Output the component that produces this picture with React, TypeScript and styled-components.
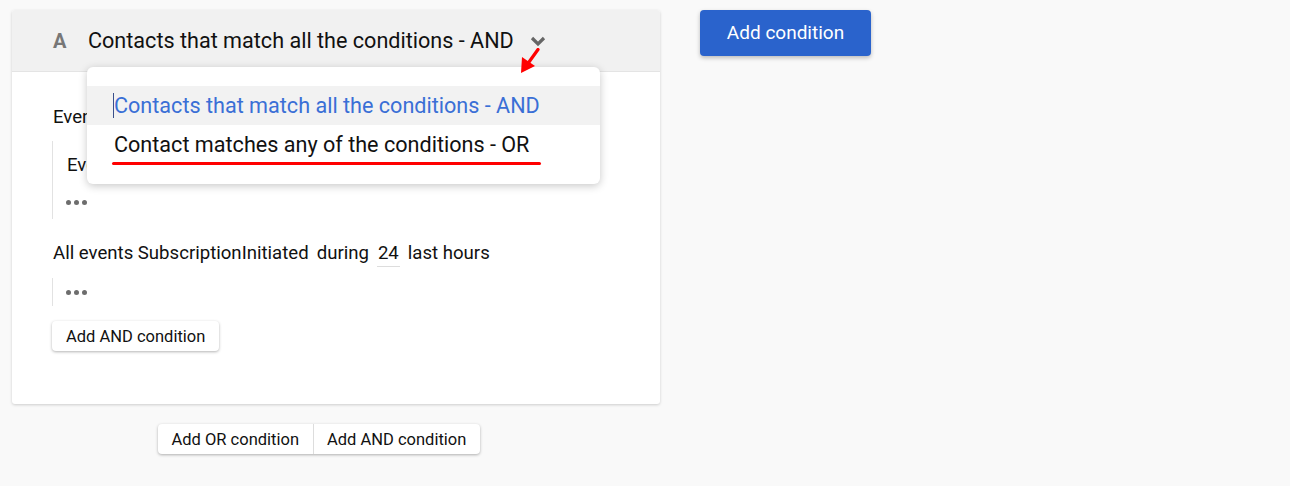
import React from "react";
import styled, { createGlobalStyle } from "styled-components";

const Global = createGlobalStyle`
  html, body { margin: 0; padding: 0; background: #f9f9f9; }
  body { font-family: Roboto, "Liberation Sans", sans-serif; color: #111; }
`;

const Page = styled.div`
  display: flex;
  align-items: flex-start;
  gap: 40px;
  padding: 10px 0 0 12px;
  width: 1290px;
  height: 486px;
  box-sizing: border-box;
  overflow: hidden;
`;

const Column = styled.div`
  display: flex;
  flex-direction: column;
  width: 648px;
`;

const Card = styled.div`
  position: relative;
  background: #fff;
  border-radius: 3px;
  box-shadow: 0 1px 3px rgba(0, 0, 0, 0.18);
  height: 394px;
`;

const Header = styled.div`
  display: flex;
  align-items: center;
  height: 61px;
  padding-left: 41px;
  background: #f1f1f1;
  border-bottom: 1px solid #e4e4e4;
  border-radius: 3px 3px 0 0;
`;

const Letter = styled.span`
  font-weight: 700;
  font-size: 20px;
  color: #777;
  width: 35px;
`;

const HeaderTitle = styled.span`
  font-size: 21.6px;
  color: #111;
  margin-top: -1px;
`;

const Chevron = styled.svg`
  margin-left: 16px;
`;

const Body = styled.div`
  padding: 33px 40px 0 40px;
  display: flex;
  flex-direction: column;
`;

const Line = styled.div<{ $mt?: number }>`
  font-size: 18.6px;
  line-height: 24px;
  display: flex;
  align-items: baseline;
  margin-top: ${(p) => p.$mt ?? 0}px;
  padding-left: 1px;
`;

const Nested = styled.div<{ $h: number; $mt: number }>`
  margin-top: ${(p) => p.$mt}px;
  border-left: 1px solid #e2e2e2;
  padding-left: 13px;
  height: ${(p) => p.$h}px;
  display: flex;
  flex-direction: column;
`;

const Dots = styled.div<{ $mt: number }>`
  display: flex;
  gap: 3px;
  margin-top: ${(p) => p.$mt}px;
  & > span {
    width: 5px;
    height: 5px;
    border-radius: 50%;
    background: #6d6d6d;
  }
`;

const Gap = styled.span`
  margin-left: 8px;
`;

const NumberField = styled.span`
  margin-left: 8px;
  padding: 0 1px;
  border-bottom: 1px solid #ddd;
  line-height: 26px;
`;

const WhiteButton = styled.button`
  align-self: flex-start;
  height: 30px;
  padding: 0 14px;
  margin-top: 15px;
  background: #fff;
  border: none;
  border-radius: 4px;
  box-shadow: 0 1px 3px rgba(0, 0, 0, 0.3);
  font-family: Roboto, "Liberation Sans", sans-serif;
  font-size: 16.5px;
  color: #111;
`;

const Group = styled.div`
  display: flex;
  align-self: flex-start;
  margin: 20px 0 0 146px;
  background: #fff;
  border-radius: 4px;
  box-shadow: 0 1px 3px rgba(0, 0, 0, 0.3);
`;

const GroupButton = styled.button<{ $divider?: boolean }>`
  height: 30px;
  padding: 0 13.5px;
  background: transparent;
  border: none;
  border-left: ${(p) => (p.$divider ? "1px solid #ddd" : "none")};
  font-family: Roboto, "Liberation Sans", sans-serif;
  font-size: 16.5px;
  color: #111;
`;

const Primary = styled.button`
  height: 46px;
  width: 171px;
  background: #2a63cc;
  color: #fff;
  border: none;
  border-radius: 4px;
  box-shadow: 0 2px 4px rgba(0, 0, 0, 0.25);
  font-family: Roboto, "Liberation Sans", sans-serif;
  font-size: 19px;
  padding: 0 0 2px;
`;

const Menu = styled.div`
  position: absolute;
  left: 75px;
  top: 57px;
  width: 513px;
  padding: 19px 0 20px;
  background: #fff;
  border-radius: 6px;
  box-shadow: 0 2px 8px rgba(0, 0, 0, 0.22);
`;

const MenuItem = styled.div<{ $active?: boolean }>`
  position: relative;
  height: 39px;
  display: flex;
  align-items: center;
  padding-left: 27px;
  font-size: 21.6px;
  background: ${(p) => (p.$active ? "#f2f2f2" : "#fff")};
  color: ${(p) => (p.$active ? "#3a6fd6" : "#111")};
`;

const Caret = styled.span`
  display: inline-block;
  width: 1px;
  height: 25px;
  background: #3a4f8a;
  margin-left: -1px;
`;

const RedUnderline = styled.div`
  position: absolute;
  left: 25px;
  width: 429px;
  bottom: -1px;
  height: 3px;
  border-radius: 2px;
  background: #f00;
`;

const Arrow = styled.svg`
  position: absolute;
  left: 508px;
  top: 38px;
`;

export default function App() {
  return (
    <>
      <Global />
      <Page>
        <Column>
          <Card>
            <Header>
              <Letter>A</Letter>
              <HeaderTitle>Contacts that match all the conditions - AND</HeaderTitle>
              <Chevron width="16" height="12" viewBox="0 0 16 12">
                <path d="M2 3 L8 9 L14 3" fill="none" stroke="#666" strokeWidth="3.2" />
              </Chevron>
            </Header>
            <Body>
              <Line>Events</Line>
              <Nested $h={78} $mt={12}>
                <Line $mt={12}>Events</Line>
                <Dots $mt={23}>
                  <span />
                  <span />
                  <span />
                </Dots>
              </Nested>
              <Line $mt={21}>
                All events SubscriptionInitiated
                <Gap>during</Gap>
                <NumberField>24</NumberField>
                <Gap>last hours</Gap>
              </Line>
              <Nested $h={28} $mt={11}>
                <Dots $mt={12}>
                  <span />
                  <span />
                  <span />
                </Dots>
              </Nested>
              <WhiteButton>Add AND condition</WhiteButton>
            </Body>
            <Menu>
              <MenuItem $active>
                <Caret />
                Contacts that match all the conditions - AND
              </MenuItem>
              <MenuItem>
                Contact matches any of the conditions - OR
                <RedUnderline />
              </MenuItem>
            </Menu>
            <Arrow width="24" height="28" viewBox="0 0 24 28">
              <path d="M18 1.5 L9 14" stroke="#f00" strokeWidth="3.2" strokeLinecap="round" fill="none" />
              <path d="M1 25 L2 9 L15 18 Z" fill="#f00" />
            </Arrow>
          </Card>
          <Group>
            <GroupButton>Add OR condition</GroupButton>
            <GroupButton $divider>Add AND condition</GroupButton>
          </Group>
        </Column>
        <Primary>Add condition</Primary>
      </Page>
    </>
  );
}
